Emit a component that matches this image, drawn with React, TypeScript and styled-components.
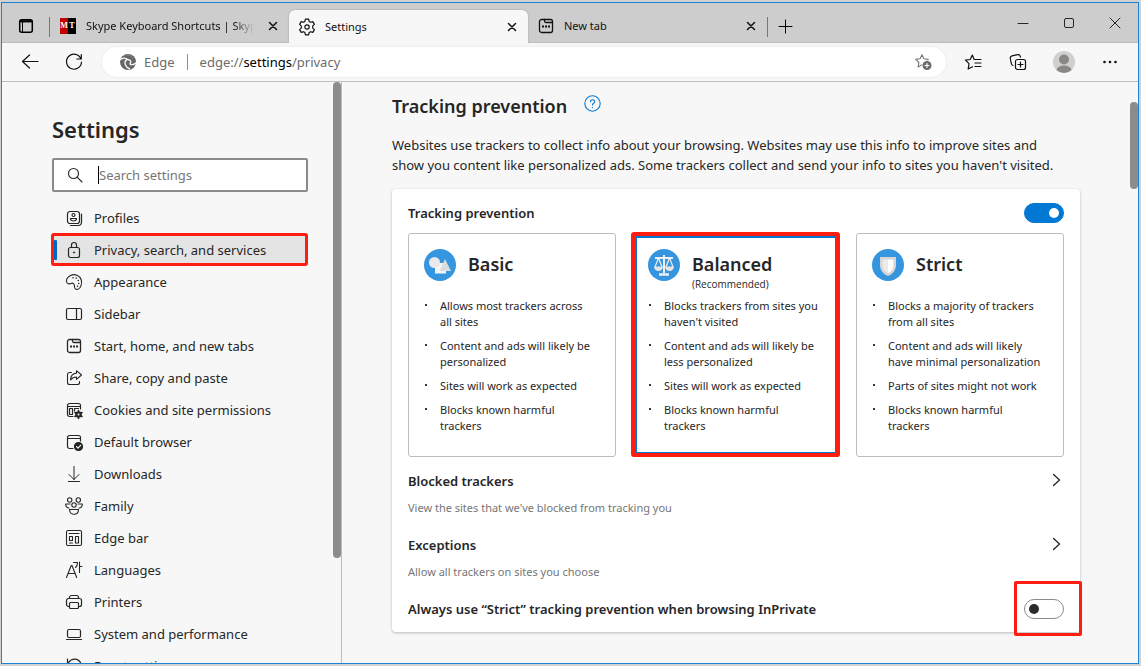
import React from "react";
import styled, { createGlobalStyle, css } from "styled-components";

const GlobalStyle = createGlobalStyle`
  *, *::before, *::after { box-sizing: border-box; }
  html, body { height: 100%; }
  body {
    margin: 0;
    background: #d2d2d2;
    color: #262626;
    font-family: "Noto Sans", "Open Sans", sans-serif;
    font-size: 13px;
    line-height: 20px;
  }
  button, input { font: inherit; color: inherit; }
  button { background: none; border: 0; padding: 0; }
  h1, h2, h3, p, ul { margin: 0; padding: 0; }
  svg { display: block; flex: none; }
`;

const Page = styled.div`
  height: 100vh;
  padding: 2px 2px 2px 1px;
`;

const BrowserWindow = styled.div`
  display: flex;
  flex-direction: column;
  height: 100%;
  overflow: hidden;
  border: 1px solid #1e83d2;
  background: #f7f7f7;
`;

/* ---------- tab strip ---------- */

const TabStrip = styled.header`
  display: flex;
  align-items: flex-end;
  flex: none;
  height: 40px;
  background: #cdcdcd;
  border-bottom: 1px solid #bcbcbc;
`;

const StripButton = styled.button<{ $width: number }>`
  display: grid;
  place-items: center;
  width: ${(p) => p.$width}px;
  height: 32px;
  color: #000;
`;

const StripDivider = styled.span`
  width: 1px;
  height: 20px;
  margin-bottom: 5px;
  background: #777;
`;

const Tab = styled.div<{ $active?: boolean }>`
  display: flex;
  align-items: center;
  gap: 10px;
  width: 239px;
  height: 32px;
  padding: 0 7px 0 10px;
  color: #111;
  font-size: 11px;
  ${(p) =>
    p.$active &&
    css`
      margin-bottom: -1px;
      height: 33px;
      background: #f7f7f7;
      border-radius: 6px 6px 0 0;
      box-shadow: 0 0 2px rgba(0, 0, 0, 0.25);
      clip-path: inset(-3px -3px 0 -3px);
    `}
`;

const TabTitle = styled.button<{ $fade?: boolean }>`
  flex: 1;
  min-width: 0;
  overflow: hidden;
  text-align: left;
  white-space: nowrap;
  ${(p) =>
    p.$fade &&
    css`
      mask-image: linear-gradient(to right, #000 88%, transparent);
    `}
`;

const TabClose = styled.button`
  display: grid;
  place-items: center;
  width: 18px;
  height: 18px;
`;

const Favicon = styled.span`
  display: grid;
  grid-template-columns: 1fr 1fr;
  width: 16px;
  height: 16px;
  overflow: hidden;
  background: linear-gradient(to right, #c00000 50%, #000 50%);
  color: #fff;
  font: bold 8px/16px "Liberation Serif", serif;
  text-align: center;
`;

const Caption = styled.div`
  display: flex;
  align-self: flex-start;
  margin-left: auto;
`;

const CaptionButton = styled.button`
  display: grid;
  place-items: center;
  width: 46px;
  height: 40px;
`;

/* ---------- toolbar ---------- */

const Toolbar = styled.div`
  display: flex;
  align-items: center;
  flex: none;
  height: 39px;
  padding: 0 5px 0 6px;
  border-bottom: 1px solid #bfbfbf;
  color: #111;
`;

const ToolButton = styled.button<{ $width: number }>`
  display: grid;
  place-items: center;
  width: ${(p) => p.$width}px;
  height: 32px;
`;

const AddressBar = styled.div`
  display: flex;
  align-items: center;
  flex: 1;
  height: 30px;
  margin: 0 5px 0 6px;
  padding: 0 14px 0 18px;
  border-radius: 15px;
  background: #fff;
  box-shadow: 0 0 3px rgba(0, 0, 0, 0.08);
  color: #6b6b6b;
`;

const Scheme = styled.span`
  display: flex;
  align-items: center;
  gap: 8px;
  padding-right: 12px;
  margin-right: 12px;
  height: 16px;
  border-right: 1px solid #8c8c8c;
`;

const Url = styled.span`
  flex: 1;
  white-space: nowrap;
  b { color: #000; font-weight: 400; }
`;

const AddressAction = styled.button`
  color: #777;
`;

/* ---------- body ---------- */

const Body = styled.div`
  display: flex;
  flex: 1;
  min-height: 0;
`;

const Sidebar = styled.aside`
  display: flex;
  flex: none;
  width: 340px;
  overflow: hidden;
  border-right: 1px solid #bdbdbd;
`;

const SidebarContent = styled.div`
  flex: 1;
  padding: 31px 25px 0 50px;
`;

const ScrollTrack = styled.div<{ $top: number }>`
  flex: none;
  width: 8px;
  padding-top: ${(p) => p.$top}px;
`;

const ScrollThumb = styled.div<{ $size: string }>`
  height: ${(p) => p.$size};
  border-radius: 4px;
  background: #8c8c8c;
`;

const PageTitle = styled.h1`
  font-size: 22px;
  line-height: 32px;
  font-weight: 600;
`;

const SearchBox = styled.label`
  display: flex;
  align-items: center;
  height: 34px;
  margin-top: 13px;
  padding-left: 13px;
  border: 2px solid #8a8a8a;
  border-radius: 2px;
  background: #fff;
`;

const Caret = styled.span`
  width: 1px;
  height: 18px;
  margin-left: 15px;
  background: #000;
`;

const SearchInput = styled.input`
  flex: 1;
  min-width: 0;
  padding: 0;
  border: 0;
  outline: 0;
  background: transparent;
  &::placeholder { color: #767676; opacity: 1; }
`;

const NavList = styled.nav`
  display: flex;
  flex-direction: column;
  margin-top: 10px;
`;

const NavLink = styled.a<{ $active?: boolean }>`
  display: flex;
  align-items: center;
  gap: 11px;
  position: relative;
  height: 32px;
  padding-left: 13px;
  color: #262626;
  text-decoration: none;
  white-space: nowrap;
  ${(p) =>
    p.$active &&
    css`
      background: #e4e4e4;
      &::before {
        content: "";
        position: absolute;
        left: 2px;
        top: 6px;
        width: 3px;
        height: 20px;
        border-radius: 1px;
        background: #0067c0;
      }
      &::after {
        content: "";
        position: absolute;
        inset: -1px 0 0 -1px;
        border: 3px solid #ff1d12;
        border-radius: 3px;
      }
    `}
`;

const Main = styled.main`
  flex: 1;
  min-width: 0;
  padding: 10px 50px 0;
`;

const HeadingRow = styled.div`
  display: flex;
  align-items: flex-start;
  gap: 17px;
`;

const SectionTitle = styled.h2`
  font-size: 18px;
  line-height: 28px;
  font-weight: 600;
`;

const HelpButton = styled.button`
  padding-top: 3px;
  color: #0f7bd0;
`;

const Intro = styled.p`
  margin-top: 15px;
  padding-right: 16px;
`;

const Card = styled.section`
  margin-top: 14px;
  padding: 10px 16px 13px;
  border-radius: 4px;
  background: #fff;
  box-shadow: 0 1px 3px rgba(0, 0, 0, 0.25);
`;

const SettingRow = styled.div<{ $height: number }>`
  display: flex;
  align-items: center;
  justify-content: space-between;
  height: ${(p) => p.$height}px;
`;

const SettingLabel = styled.label`
  font-weight: 600;
`;

const Switch = styled.input<{ $marked?: boolean }>`
  appearance: none;
  position: relative;
  display: grid;
  align-items: center;
  width: 40px;
  height: 20px;
  margin: 0;
  padding: 0 4px;
  border: 1px solid #8a8a8a;
  border-radius: 10px;
  background: #fff;
  &::before {
    content: "";
    width: 10px;
    height: 10px;
    border-radius: 50%;
    background: #2b2b2b;
  }
  &:checked { border-color: #0078d4; background: #0078d4; }
  &:checked::before { justify-self: end; background: #fff; }
  ${(p) =>
    p.$marked &&
    css`
      &::after {
        content: "";
        position: absolute;
        inset: -19px -19px -18px -11px;
        border: 3px solid #ff1d12;
        border-radius: 2px;
      }
    `}
`;

const OptionGrid = styled.div`
  display: grid;
  grid-template-columns: repeat(3, 1fr);
  gap: 16px;
  margin: 6px 0 14px;
`;

const Option = styled.label<{ $selected?: boolean }>`
  position: relative;
  min-height: 224px;
  padding: 15px 19px 0 15px;
  border: 1px solid #bdbdbd;
  border-radius: 3px;
  ${(p) =>
    p.$selected &&
    css`
      border-color: #0078d4;
      box-shadow: inset 0 0 0 4px #0078d4;
      &::after {
        content: "";
        position: absolute;
        inset: -2px -1px -1px -2px;
        border: 4px solid #ff1d12;
        border-radius: 3px;
      }
    `}
`;

const OptionRadio = styled.input`
  position: absolute;
  inset: 0;
  width: 100%;
  height: 100%;
  margin: 0;
  opacity: 0;
`;

const OptionHead = styled.div`
  display: flex;
  gap: 12px;
  height: 49px;
`;

const OptionTitle = styled.h3`
  font-size: 18px;
  line-height: 30px;
  font-weight: 600;
`;

const OptionNote = styled.small`
  display: block;
  font-family: "Open Sans", "Noto Sans", sans-serif;
  font-size: 10px;
  line-height: 10px;
`;

const BulletList = styled.ul`
  display: flex;
  flex-direction: column;
  gap: 8px;
  list-style: none;
  font-size: 11px;
  line-height: 16px;
`;

const Bullet = styled.li`
  display: flex;
  &::before {
    content: "";
    flex: none;
    width: 2px;
    height: 2px;
    margin: 6px 13px 0 1px;
    background: #333;
  }
`;

const LinkBlock = styled.div`
  height: 64px;
`;

const LinkButton = styled.button`
  display: flex;
  align-items: center;
  justify-content: space-between;
  width: 100%;
  height: 20px;
  padding-right: 2px;
  font-weight: 600;
`;

const LinkNote = styled.p`
  margin-top: 7px;
  color: #767676;
  font-size: 11px;
`;

/* ---------- icons ---------- */

type IconProps = { size?: number; inset?: number; width?: number; children: React.ReactNode };

const Icon = ({ size = 18, inset = 0, width = 1, children }: IconProps) => (
  <svg
    width={size - inset * 2}
    height={size - inset * 2}
    viewBox={`${inset} ${inset} ${size - inset * 2} ${size - inset * 2}`}
    fill="none"
    stroke="currentColor"
    strokeWidth={width}
    strokeLinecap="round"
    strokeLinejoin="round"
    overflow="visible"
    aria-hidden="true"
  >
    {children}
  </svg>
);

const NewTabIcon = ({ inset, width }: { inset?: number; width?: number }) => (
  <Icon inset={inset} width={width}>
    <rect x="2.5" y="2.5" width="13" height="13" rx="2" />
    <path d="M7.5 2.5v1.5a1.5 1.5 0 0 0 1.5 1.5h6.5" />
    <path d="M5 9.5h2M8 9.5h2M11 9.5h2" strokeWidth="1.8" strokeLinecap="butt" />
  </Icon>
);

const CloseIcon = () => (
  <Icon size={10} width={1.5}>
    <path d="M1.5 1.5l7 7M8.5 1.5l-7 7" />
  </Icon>
);

const GearIcon = () => (
  <Icon inset={1} width={1.2}>
    <path d="M7.4 1.2h3.2l.5 2.2 1.5.9 2.2-.7 1.6 2.8-1.7 1.5v2.2l1.7 1.5-1.6 2.8-2.2-.7-1.5.9-.5 2.2H7.4l-.5-2.2-1.5-.9-2.2.7-1.6-2.8 1.7-1.5V7.9L1.6 6.4l1.6-2.8 2.2.7 1.5-.9z" />
    <circle cx="9" cy="9" r="2.2" />
  </Icon>
);

const navItems: { label: string; icon: React.ReactNode; active?: boolean }[] = [
  {
    label: "Profiles",
    icon: (
      <Icon width={1.2}>
        <rect x="2.5" y="2.5" width="12" height="12" rx="2.5" />
        <path d="M16.5 5v8a3.5 3.5 0 0 1-3.5 3.5H5.5" />
        <circle cx="8.5" cy="6" r="1.5" />
        <path d="M5.5 9.5h6c.5 3.3-6.5 3.3-6 0z" />
      </Icon>
    ),
  },
  {
    label: "Privacy, search, and services",
    active: true,
    icon: (
      <Icon width={1.2}>
        <rect x="3.5" y="6.5" width="11" height="10" rx="2" />
        <path d="M6.5 6.5V4a2.5 2.5 0 0 1 5 0v2.5" />
        <circle cx="9" cy="11.5" r="0.7" fill="currentColor" strokeWidth="0.6" />
      </Icon>
    ),
  },
  {
    label: "Appearance",
    icon: (
      <Icon width={1.1}>
        <path d="M1.5 8.5c-.3-2 1.3-4.5 4-6 4.5-2.2 9.5.3 10.8 4.5.9 3-.3 8.300-3.300 9.300-2.200.7-3.500-.8-3.500-2.800 0-2.700-1.500-4-3.500-3-1.500.8-4.100.5-4.500-2z" />
        <path d="M8 4.7h.1M11.2 5h.1M13.2 7.5h.1M13.7 10.6h.1M12.5 13.3h.1" strokeWidth="1.5" />
      </Icon>
    ),
  },
  {
    label: "Sidebar",
    icon: (
      <Icon width={1.2}>
        <rect x="1.5" y="3.5" width="15" height="11" rx="1.5" />
        <path d="M11.5 3.5v11" />
      </Icon>
    ),
  },
  { label: "Start, home, and new tabs", icon: <NewTabIcon width={1.3} /> },
  {
    label: "Share, copy and paste",
    icon: (
      <Icon width={1.1}>
        <path d="M6.5 3.5h-2a2 2 0 0 0-2 2v8a2 2 0 0 0 2 2h8a2 2 0 0 0 2-2v-1" />
        <path d="M11.5 1.7l5 4.3-5 4.3V8c-2.8 0-4.5 1-6 3 .1-3.8 2.2-6.5 6-6.9z" />
      </Icon>
    ),
  },
  {
    label: "Cookies and site permissions",
    icon: (
      <Icon width={1.2}>
        <path d="M8 15.5H4.5a2 2 0 0 1-2-2v-9a2 2 0 0 1 2-2h9a2 2 0 0 1 2 2V8M2.5 5.5h13" />
        <path d="M4.5 7.5h3v6h-3zM9.5 7.5h4M9.5 7.5V10" />
        <circle cx="13.5" cy="13.5" r="2.2" strokeWidth="2.2" />
        <path d="M13.5 9.5v8M10 11.5l7 4M17 11.5l-7 4" strokeWidth="1.6" />
        <circle cx="13.5" cy="13.5" r="1" fill="#f7f7f7" stroke="none" />
      </Icon>
    ),
  },
  {
    label: "Default browser",
    icon: (
      <Icon width={1.2}>
        <path d="M8 15.5H4.5a2 2 0 0 1-2-2v-9a2 2 0 0 1 2-2h9a2 2 0 0 1 2 2V8M2.5 5.5h13" />
        <circle cx="13.5" cy="13.5" r="4" fill="currentColor" />
        <path d="M11.5 13.6l1.5 1.5 2.6-2.8" stroke="#f7f7f7" />
      </Icon>
    ),
  },
  {
    label: "Downloads",
    icon: (
      <Icon>
        <path d="M9 1.5v13M4 9.5l5 5 5-5M3.5 16.5h11" />
      </Icon>
    ),
  },
  {
    label: "Family",
    icon: (
      <Icon width={1.1}>
        <circle cx="4.7" cy="3" r="2.2" />
        <circle cx="13.3" cy="3" r="2.2" />
        <circle cx="9" cy="8" r="2.2" />
        <path d="M4.5 12.5h9c0 6.3-9 6.3-9 0zM5 7H.7c0 2.5 1.3 3.9 3.3 4M13 7h4.3c0 2.5-1.3 3.9-3.3 4" />
      </Icon>
    ),
  },
  {
    label: "Edge bar",
    icon: (
      <Icon width={1.1}>
        <rect x="1.5" y="1.5" width="15" height="15" rx="1.5" />
        <path d="M4 4.5h10M4.5 7.5h3v4h-3zM10.5 7.5h3v6.5h-3zM4.5 14h3" />
      </Icon>
    ),
  },
  {
    label: "Languages",
    icon: (
      <Icon width={1.1}>
        <path d="M1.5 16.5l4.7-12h.8l4.7 12M3.3 12.5h6.5M8.5 1.5h4c0 2.5-.7 4-2 5M14.5 1v10.5M14.5 5.5h2.5" />
      </Icon>
    ),
  },
  {
    label: "Printers",
    icon: (
      <Icon width={1.2}>
        <path d="M4.5 13.5h-1a2 2 0 0 1-2-2V7.5a2 2 0 0 1 2-2h11a2 2 0 0 1 2 2v4a2 2 0 0 1-2 2h-1M4.5 5.5v-1a2 2 0 0 1 2-2h5a2 2 0 0 1 2 2v1" />
        <rect x="4.5" y="9.5" width="9" height="6" rx="1" />
      </Icon>
    ),
  },
  {
    label: "System and performance",
    icon: (
      <Icon width={1.2}>
        <rect x="2.5" y="4.5" width="13" height="8" rx="1.5" />
        <path d="M1.5 14.5h15" />
      </Icon>
    ),
  },
  {
    label: "Reset settings",
    icon: (
      <Icon width={1.2}>
        <path d="M2.5 2v4.5H7M3 6.5C6 .5 14 .5 16 7c1 5-2 9-6.5 9.5" />
      </Icon>
    ),
  },
];

const Disc = ({ children }: { children: React.ReactNode }) => (
  <svg width="32" height="32" viewBox="0 0 32 32" aria-hidden="true">
    <circle cx="16" cy="16" r="16" fill="#3595de" />
    {children}
  </svg>
);

const options: {
  name: string;
  note?: string;
  selected?: boolean;
  icon: React.ReactNode;
  points: string[];
}[] = [
  {
    name: "Basic",
    icon: (
      <Disc>
        <path d="M11 14h11v10.5H11z" fill="#f4f4f4" />
        <circle cx="10.5" cy="13.5" r="5.5" fill="#e9e9e9" />
        <path d="M21 10l6 12H15.5z" fill="#dcdcdc" />
      </Disc>
    ),
    points: [
      "Allows most trackers across all sites",
      "Content and ads will likely be personalized",
      "Sites will work as expected",
      "Blocks known harmful trackers",
    ],
  },
  {
    name: "Balanced",
    note: "(Recommended)",
    selected: true,
    icon: (
      <Disc>
        <g fill="none" stroke="#f0f0f0">
          <path d="M7 9h18M16 6v18" strokeWidth="2" />
          <path d="M11 25.5h10" strokeWidth="2.5" />
          <path d="M10.500 9l-3.500 9M10.500 9l3.500 9M21.500 9l-3.500 9M21.500 9l3.500 9" strokeWidth="1.2" />
        </g>
        <path d="M6 17.5h9a4.5 4.5 0 0 1-9 0zM17 17.5h9a4.5 4.5 0 0 1-9 0z" fill="#e4e4e4" />
      </Disc>
    ),
    points: [
      "Blocks trackers from sites you haven't visited",
      "Content and ads will likely be less personalized",
      "Sites will work as expected",
      "Blocks known harmful trackers",
    ],
  },
  {
    name: "Strict",
    icon: (
      <Disc>
        <path d="M8 8h16v8c0 5-3 9-8 11-5-2-8-6-8-11z" fill="#d6d6d6" />
        <path d="M10.5 10.5H16v13.8c-3.5-1.7-5.5-4.5-5.5-8.3z" fill="#ebebeb" />
        <path d="M16 10.5h5.5V16c0 3.8-2 6.6-5.5 8.3z" fill="#fff" />
      </Disc>
    ),
    points: [
      "Blocks a majority of trackers from all sites",
      "Content and ads will likely have minimal personalization",
      "Parts of sites might not work",
      "Blocks known harmful trackers",
    ],
  },
];

const Chevron = () => (
  <Icon size={12} width={1.3}>
    <path d="M3.5 -.5l6 5.5-6 5.5" />
  </Icon>
);

const starPath =
  "M7 .8l1.900 4 4.400.6-3.200 3.100.8 4.400L7 10.800l-3.900 2.100.8-4.400L.7 5.400l4.400-.6z";

export default function App() {
  return (
    <>
      <GlobalStyle />
      <Page>
        <BrowserWindow>
          <TabStrip>
            <StripButton $width={47} aria-label="Tab actions">
              <Icon size={16} width={1.5}>
                <rect x="1.7" y="1.7" width="12.6" height="12.6" rx="2" />
                <path d="M2 3.3h12" strokeWidth="2.2" strokeLinecap="butt" />
                <path d="M4.5 4v10" strokeWidth="1" />
              </Icon>
            </StripButton>
            <StripDivider />
            <Tab>
              <Favicon aria-hidden="true">
                <span>M</span>
                <span>T</span>
              </Favicon>
              <TabTitle $fade>Skype Keyboard Shortcuts | Skyp</TabTitle>
              <TabClose aria-label="Close tab"><CloseIcon /></TabClose>
            </Tab>
            <Tab $active>
              <GearIcon />
              <TabTitle>Settings</TabTitle>
              <TabClose aria-label="Close tab"><CloseIcon /></TabClose>
            </Tab>
            <Tab>
              <NewTabIcon inset={1} width={1.3} />
              <TabTitle>New tab</TabTitle>
              <TabClose aria-label="Close tab"><CloseIcon /></TabClose>
            </Tab>
            <StripDivider />
            <StripButton $width={35} aria-label="New tab">
              <Icon size={15}>
                <path d="M7.5 1v13M1 7.5h13" />
              </Icon>
            </StripButton>
            <Caption>
              <CaptionButton aria-label="Minimize">
                <Icon size={10}><path d="M0 5.5h10" /></Icon>
              </CaptionButton>
              <CaptionButton aria-label="Maximize">
                <Icon size={10}><rect x=".5" y=".5" width="9" height="9" rx="1.5" /></Icon>
              </CaptionButton>
              <CaptionButton aria-label="Close">
                <Icon size={10}><path d="M0 0l10 10M10 0L0 10" /></Icon>
              </CaptionButton>
            </Caption>
          </TabStrip>

          <Toolbar>
            <ToolButton $width={44} aria-label="Back">
              <Icon width={1.2}><path d="M17 8.5H1.5M8.5 2L1.5 8.5l7 6.5" /></Icon>
            </ToolButton>
            <ToolButton $width={44} aria-label="Refresh">
              <Icon width={1.2}><path d="M16 6A7.5 7.5 0 1 0 16.5 9M16.3 1.5V6h-4.5" /></Icon>
            </ToolButton>
            <AddressBar>
              <Scheme>
                <svg width="16" height="16" viewBox="0 0 16 16" aria-hidden="true">
                  <circle cx="8" cy="8" r="8" fill="#666" />
                  <path d="M0 6c2-2.5 6-2.5 7.5-.5C5 6 4.5 8.5 5.5 11c.8 2 2.5 3.5 4.5 4" fill="none" stroke="#fff" strokeWidth="1.3" />
                  <path d="M8 6c2.500-.5 3.500 1.500 2.300 3-.6.8.2 1.800 1.700 1.700 1.500 0 3-.7 4-2" fill="none" stroke="#fff" strokeWidth="1.3" />
                  <path d="M4 1.6C8-.3 12 2 12.5 5" fill="none" stroke="#8a8a8a" />
                </svg>
                Edge
              </Scheme>
              <Url>edge://<b>settings</b>/privacy</Url>
              <AddressAction aria-label="Add this page to favorites">
                <Icon width={1.1}>
                  <g transform="translate(1 1)"><path d={starPath} /></g>
                  <circle cx="13" cy="12.5" r="5.2" fill="#fff" stroke="none" />
                  <circle cx="13" cy="12.5" r="4.5" fill="#6b6b6b" stroke="none" />
                  <path d="M13 10.5v4M11 12.5h4" stroke="#fff" />
                </Icon>
              </AddressAction>
            </AddressBar>
            <ToolButton $width={44} aria-label="Favorites">
              <Icon width={1.2}>
                <path d="M10 6L8.300 2 6.200 6.500 1.500 7.200l3.500 3.500L4.200 16l4.300-2.200M10 6.500H17M11 10h6M11 13.500h6" />
              </Icon>
            </ToolButton>
            <ToolButton $width={46} aria-label="Collections">
              <Icon width={1.2}>
                <rect x="6.5" y="6.5" width="10" height="10" rx="2" />
                <path d="M11.5 9v5M9 11.5h5M4 12.5c-1.300-.3-1.500-1.200-1.800-2.500L1.300 5.500c-.3-1.500.4-2.300 1.700-2.600l5.500-1.200c1.500-.3 2.500.3 2.800 1.600l.2.900" />
              </Icon>
            </ToolButton>
            <ToolButton $width={46} aria-label="Profile">
              <svg width="22" height="22" viewBox="0 0 22 22" aria-hidden="true">
                <circle cx="11" cy="11" r="11" fill="#d2d0ce" />
                <circle cx="11" cy="8.5" r="5" fill="#8a8886" />
                <path d="M3.5 19c1-6 14-6 15 0a11 11 0 0 1-15 0z" fill="#8a8886" />
              </svg>
            </ToolButton>
            <ToolButton $width={46} aria-label="Settings and more">
              <Icon>
                <g fill="currentColor" stroke="none">
                  <circle cx="3.5" cy="9" r="1.3" />
                  <circle cx="9" cy="9" r="1.3" />
                  <circle cx="14.5" cy="9" r="1.3" />
                </g>
              </Icon>
            </ToolButton>
          </Toolbar>

          <Body>
            <Sidebar>
              <SidebarContent>
                <PageTitle>Settings</PageTitle>
                <SearchBox>
                  <Icon size={16} width={1.1}>
                    <circle cx="6.5" cy="6.5" r="5" />
                    <path d="M10.2 10.2l4.8 4.8" />
                  </Icon>
                  <Caret />
                  <SearchInput type="search" placeholder="Search settings" aria-label="Search settings" />
                </SearchBox>
                <NavList>
                  {navItems.map((item) => (
                    <NavLink key={item.label} href="#" $active={item.active}>
                      {item.icon}
                      {item.label}
                    </NavLink>
                  ))}
                </NavList>
              </SidebarContent>
              <ScrollTrack $top={0}>
                <ScrollThumb $size="82%" />
              </ScrollTrack>
            </Sidebar>

            <Main>
              <HeadingRow>
                <SectionTitle>Tracking prevention</SectionTitle>
                <HelpButton aria-label="Learn more">
                  <Icon size={17} width={1.1}>
                    <circle cx="8.5" cy="8.5" r="7.7" />
                    <path d="M6.5 6.8c0-2.8 4.2-2.8 4.2 0C10.7 8.3 8.5 8.3 8.5 10.1M8.5 12.5v.2" />
                  </Icon>
                </HelpButton>
              </HeadingRow>
              <Intro>
                Websites use trackers to collect info about your browsing. Websites may use this
                info to improve sites and show you content like personalized ads. Some trackers
                collect and send your info to sites you haven't visited.
              </Intro>
              <Card>
                <SettingRow $height={28}>
                  <SettingLabel htmlFor="tracking">Tracking prevention</SettingLabel>
                  <Switch id="tracking" type="checkbox" role="switch" defaultChecked />
                </SettingRow>
                <OptionGrid>
                  {options.map((o) => (
                    <Option key={o.name} $selected={o.selected}>
                      <OptionRadio type="radio" name="level" aria-label={o.name} defaultChecked={o.selected} />
                      <OptionHead>
                        {o.icon}
                        <div>
                          <OptionTitle>{o.name}</OptionTitle>
                          {o.note && <OptionNote>{o.note}</OptionNote>}
                        </div>
                      </OptionHead>
                      <BulletList>
                        {o.points.map((p) => (
                          <Bullet key={p}>{p}</Bullet>
                        ))}
                      </BulletList>
                    </Option>
                  ))}
                </OptionGrid>
                <LinkBlock>
                  <LinkButton>Blocked trackers<Chevron /></LinkButton>
                  <LinkNote>View the sites that we've blocked from tracking you</LinkNote>
                </LinkBlock>
                <LinkBlock>
                  <LinkButton>Exceptions<Chevron /></LinkButton>
                  <LinkNote>Allow all trackers on sites you choose</LinkNote>
                </LinkBlock>
                <SettingRow $height={20}>
                  <SettingLabel htmlFor="inprivate">
                    Always use “Strict” tracking prevention when browsing InPrivate
                  </SettingLabel>
                  <Switch id="inprivate" type="checkbox" role="switch" $marked />
                </SettingRow>
              </Card>
            </Main>
            <ScrollTrack $top={20}>
              <ScrollThumb $size="87px" />
            </ScrollTrack>
          </Body>
        </BrowserWindow>
      </Page>
    </>
  );
}
